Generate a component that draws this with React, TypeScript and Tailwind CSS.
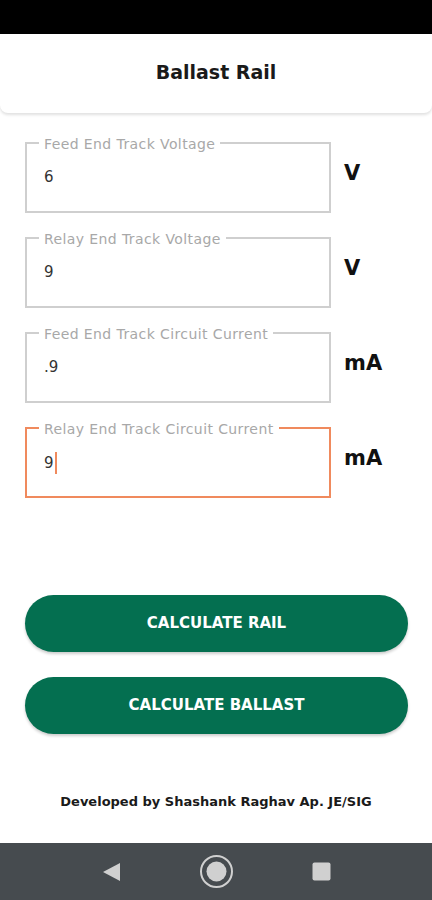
import { useState } from "react";

const font = { fontFamily: '"DejaVu Sans", "Open Sans", sans-serif' };

interface FieldProps {
  label: string;
  value: string;
  unit: string;
  focused?: boolean;
}

function Field({ label, value, unit, focused }: FieldProps) {
  return (
    <div className="flex items-center">
      <div
        className={`relative w-[306px] h-[71px] border-2 ${
          focused ? "border-[#f08a5d]" : "border-[#cfcfcf]"
        }`}
      >
        <span className="absolute -top-[8px] left-[12px] bg-white px-[5px] text-[14px] leading-[16px] tracking-[0.4px] text-[#a8a8a8]">
          {label}
        </span>
        <div className="pl-[17px] pt-[23px] text-[15px] leading-[20px] text-[#333] flex items-center">
          {value}
          {focused && <span className="inline-block w-[2px] h-[22px] bg-[#f08a5d] ml-[1px]" />}
        </div>
      </div>
      <span className="ml-[13px] -mt-[7px] text-[21px] font-bold text-[#111]">{unit}</span>
    </div>
  );
}

export default function App() {
  const [fields] = useState([
    { label: "Feed End Track Voltage", value: "6", unit: "V" },
    { label: "Relay End Track Voltage", value: "9", unit: "V" },
    { label: "Feed End Track Circuit Current", value: ".9", unit: "mA" },
    { label: "Relay End Track Circuit Current", value: "9", unit: "mA", focused: true },
  ]);

  return (
    <div className="w-[432px] h-[900px] bg-white flex flex-col overflow-hidden" style={font}>
      {/* status bar */}
      <div className="h-[34px] bg-black shrink-0" />

      {/* header */}
      <div className="h-[79px] shrink-0 bg-white rounded-b-[8px] shadow-[0_2px_3px_rgba(0,0,0,0.12)] flex items-center justify-center">
        <h1 className="text-[19px] font-bold text-[#1a1a1a] -mt-[3px]">Ballast Rail</h1>
      </div>

      {/* form */}
      <div className="flex flex-col gap-[24px] pl-[25px] pt-[29px]">
        {fields.map((f) => (
          <Field key={f.label} {...f} />
        ))}
      </div>

      {/* buttons */}
      <div className="flex flex-col gap-[25px] px-[25px] mt-[97px]">
        <button className="h-[57px] w-[383px] rounded-full bg-[#046f50] text-white text-[15px] font-bold shadow-[0_2px_3px_rgba(0,0,0,0.2)]">
          CALCULATE RAIL
        </button>
        <button className="h-[57px] w-[383px] rounded-full bg-[#046f50] text-white text-[15px] font-bold shadow-[0_2px_3px_rgba(0,0,0,0.2)]">
          CALCULATE BALLAST
        </button>
      </div>

      <div className="flex-1 flex items-start justify-center pt-[58px]">
        <p className="text-[13px] font-bold text-[#1a1a1a]">Developed by Shashank Raghav Ap. JE/SIG</p>
      </div>

      {/* nav bar */}
      <div className="h-[57px] shrink-0 bg-[#464b4f] flex items-center justify-center gap-[78px]">
        <svg width="19" height="20" viewBox="0 0 19 20">
          <path d="M1 10 L18 1 L18 19 Z" fill="#d0d0d0" />
        </svg>
        <svg width="35" height="35" viewBox="0 0 35 35">
          <circle cx="17.5" cy="17.5" r="15.5" fill="none" stroke="#d0d0d0" strokeWidth="2" />
          <circle cx="17.5" cy="17.5" r="10" fill="#d0d0d0" />
        </svg>
        <svg width="19" height="19" viewBox="0 0 19 19">
          <rect x="0.5" y="0.5" width="18" height="18" rx="2" fill="#d0d0d0" />
        </svg>
      </div>
    </div>
  );
}
